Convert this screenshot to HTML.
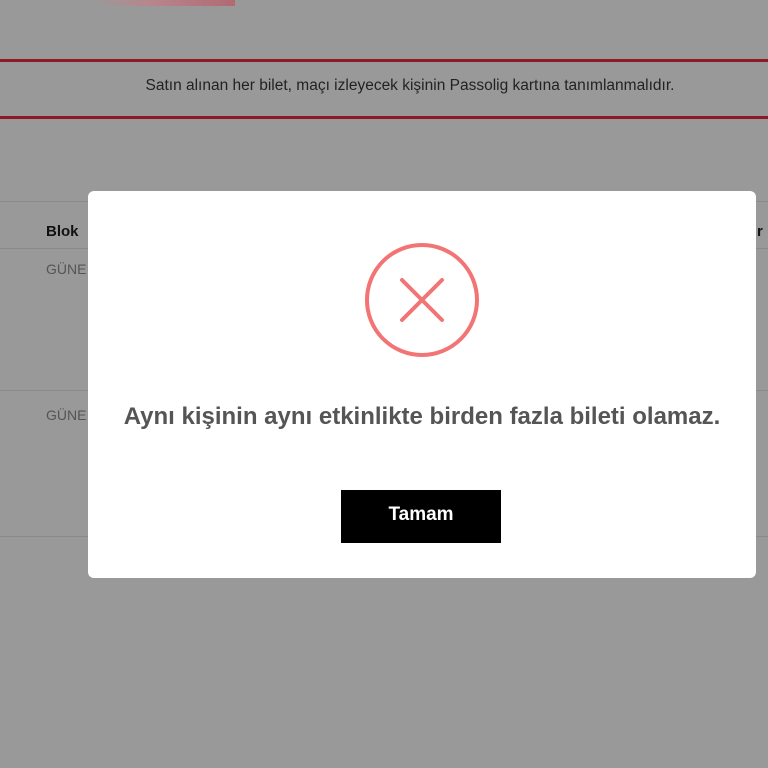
<!DOCTYPE html>
<html><head><meta charset="utf-8"><style>
body{margin:0;width:768px;height:768px;background:#999;position:relative;overflow:hidden;font-family:"Liberation Sans",sans-serif}
.a{position:absolute}
</style></head><body>
<div class="a" style="left:95px;top:0;width:140px;height:6px;background:linear-gradient(90deg,#999,#b7868c 40%,#b06a72)"></div>
<div class="a" style="left:0;top:59px;width:768px;height:3px;background:#8e1a28"></div>
<div class="a" style="left:0;top:116px;width:768px;height:3px;background:#8e1a28"></div>
<div class="a" style="left:26px;top:77px;width:768px;text-align:center;font-size:15.5px;color:#222">Satın alınan her bilet, maçı izleyecek kişinin Passolig kartına tanımlanmalıdır.</div>
<div class="a" style="left:0;top:201px;width:768px;height:1px;background:#8a8a8a"></div>
<div class="a" style="left:0;top:248px;width:768px;height:1px;background:#8a8a8a"></div>
<div class="a" style="left:0;top:390px;width:768px;height:1px;background:#8a8a8a"></div>
<div class="a" style="left:0;top:536px;width:768px;height:1px;background:#8a8a8a"></div>
<div class="a" style="left:46px;top:223px;font-size:15px;font-weight:bold;color:#111">Blok</div>
<div class="a" style="left:757px;top:223px;font-size:15px;font-weight:bold;color:#111">r</div>
<div class="a" style="left:46px;top:261px;font-size:14px;color:#555">GÜNE</div>
<div class="a" style="left:46px;top:407px;font-size:14px;color:#555">GÜNE</div>
<div class="a" style="left:88px;top:191px;width:668px;height:387px;background:#fff;border-radius:6px"></div>
<svg class="a" style="left:0;top:0" width="768" height="768"><circle cx="422" cy="300" r="55" fill="none" stroke="#f27474" stroke-width="4"/><path d="M402 280L442 320M442 280L402 320" stroke="#f27474" stroke-width="4" stroke-linecap="round"/></svg>
<div class="a" style="left:88px;top:403px;width:668px;text-align:center;font-size:24px;font-weight:bold;color:#555">Aynı kişinin aynı etkinlikte birden fazla bileti olamaz.</div>
<div class="a" style="left:341px;top:490px;width:160px;height:53px;background:#000;color:#fff;font-weight:bold;font-size:19px;text-align:center;line-height:50px">Tamam</div>
</body></html>
